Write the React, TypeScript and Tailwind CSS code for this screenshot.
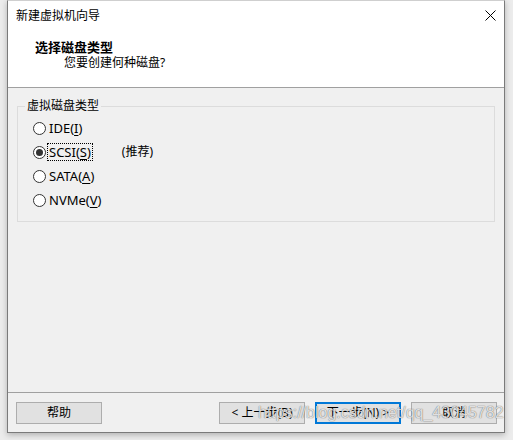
import React from "react";

const cjk = "font-['Microsoft_YaHei','Noto_Sans','Noto_Sans_CJK_SC',sans-serif]";

function Radio({ checked }: { checked?: boolean }) {
  return (
    <span className="w-[13px] h-[13px] rounded-full border border-[#333333] bg-white flex items-center justify-center shrink-0">
      {checked && <span className="w-[7px] h-[7px] rounded-full bg-[#333333]" />}
    </span>
  );
}

function Option({ label, mn, checked, focus, extra }: { label: string; mn: string; checked?: boolean; focus?: boolean; extra?: string }) {
  return (
    <div className="h-[24px] flex items-center pl-[15px]">
      <Radio checked={checked} />
      <span
        className={`ml-[2px] px-[1px] text-[13px] leading-[16px] text-black ${
          focus ? "outline outline-1 outline-dotted outline-black" : ""
        }`}
      >
        {label}(<span className="underline underline-offset-2">{mn}</span>)
      </span>
      {extra && <span className="ml-[30px] text-[12px] leading-[16px] text-black">{extra}</span>}
    </div>
  );
}

function Btn({ children, primary }: { children: React.ReactNode; primary?: boolean }) {
  return (
    <button
      className={`w-[86px] h-[22px] bg-[#e1e1e1] text-[12px] text-black flex items-center justify-center ${
        primary ? "border-2 border-[#0078d7]" : "border border-[#adadad]"
      }`}
    >
      {children}
    </button>
  );
}

export default function App() {
  return (
    <div className={`w-[513px] h-[440px] bg-[#ececec] overflow-hidden relative ${cjk}`}>
      <div className="ml-[7px] w-[498px] h-[433px] border border-[#7a7a7a] border-t-[#cfcfcf] bg-[#f0f0f0] flex flex-col shadow-[0_2px_6px_rgba(0,0,0,0.25)]">
        <div className="h-[87px] bg-white border-b border-[#a0a0a0] flex flex-col">
          <div className="h-[29px] flex items-center justify-between pl-[8px] pr-[9px]">
            <span className="text-[12px] text-black">新建虚拟机向导</span>
            <svg width="11" height="11" viewBox="0 0 11 11" className="mr-[-1px]">
              <path d="M0.5 0.5L10.5 10.5M10.5 0.5L0.5 10.5" stroke="#000" strokeWidth="1" />
            </svg>
          </div>
          <div className="mt-[9px] pl-[27px] text-[13px] leading-[16px] font-bold text-black">选择磁盘类型</div>
          <div className="pl-[56px] text-[12px] leading-[16px] text-black">您要创建何种磁盘?</div>
        </div>

        <div className="flex-1 px-[9px] pt-[18px]">
          <div className="relative h-[116px] border border-[#dcdcdc] pt-[9px]">
            <span className="absolute left-[7px] top-[-9px] px-[2px] bg-[#f0f0f0] text-[12px] leading-[16px] text-black">
              虚拟磁盘类型
            </span>
            <Option label="IDE" mn="I" />
            <Option label="SCSI" mn="S" checked focus extra="(推荐)" />
            <Option label="SATA" mn="A" />
            <Option label="NVMe" mn="V" />
          </div>
        </div>

        <div className="h-[40px] border-t border-[#a0a0a0] flex items-start pt-[9px] pl-[8px] pr-[7px]">
          <Btn>帮助</Btn>
          <div className="flex-1" />
          <div className="flex gap-[10px]">
            <Btn>&lt; 上一步(B)</Btn>
            <Btn primary>下一步(N) &gt;</Btn>
            <Btn>取消</Btn>
          </div>
        </div>
      </div>
      <span className="absolute left-[258px] top-[402px] font-['Liberation_Sans',sans-serif] text-[16px] leading-[22px] text-white/80 [text-shadow:0_0_1px_rgba(0,0,0,0.5),0_0_1px_rgba(0,0,0,0.3)] pointer-events-none">
        https://blog.csdn.net/qq_43045782
      </span>
    </div>
  );
}
